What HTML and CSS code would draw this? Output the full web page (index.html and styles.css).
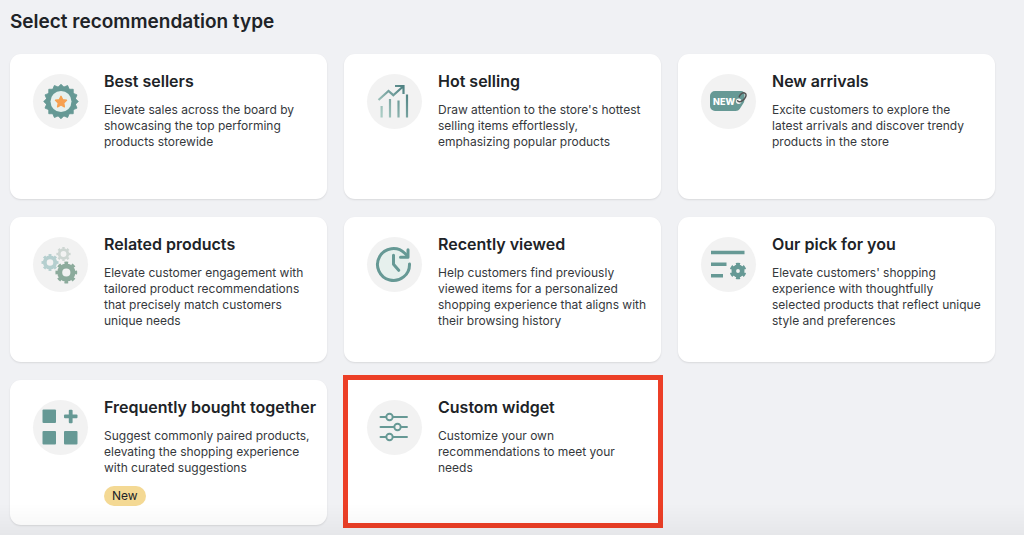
FILE: index.html
```html
<!DOCTYPE html>
<html lang="en">
<head>
<meta charset="utf-8">
<meta name="viewport" content="width=device-width, initial-scale=1">
<title>Select recommendation type</title>
<link rel="stylesheet" href="styles.css">
</head>
<body>
<main class="page">
  <h1 class="page-title">Select recommendation type</h1>
  <div class="card-grid">
    <button type="button" class="card">
      <svg class="card-icon" viewBox="0 0 55 55" aria-hidden="true">
        <g fill="#669995" stroke="#669995" stroke-width=".8" stroke-linejoin="round" transform="translate(28 27.5)">
          <path d="M0-17.300 17.300 0 0 17.300-17.300 0z"/>
          <path d="M0-17.300 17.300 0 0 17.300-17.300 0z" transform="rotate(22.5)"/>
          <path d="M0-17.300 17.300 0 0 17.300-17.300 0z" transform="rotate(45)"/>
          <path d="M0-17.300 17.300 0 0 17.300-17.300 0z" transform="rotate(67.5)"/>
        </g>
        <circle cx="28" cy="27.5" r="10.5" fill="#e6f0ed"/>
        <path d="M28 22.3l1.7 3.5 3.8.5-2.8 2.7.7 3.8-3.4-1.8-3.4 1.8.7-3.8-2.8-2.700 3.800-.5z" fill="#f6a04f" stroke="#f6a04f" stroke-width="1.4" stroke-linejoin="round"/>
      </svg>
      <span class="card-body">
        <span class="card-title">Best sellers</span>
        <span class="card-text">Elevate sales across the board by showcasing the top performing products storewide</span>
      </span>
    </button>
    <button type="button" class="card">
      <svg class="card-icon" viewBox="0 0 55 55" aria-hidden="true">
        <defs>
          <linearGradient id="growth" gradientUnits="userSpaceOnUse" x1="13" y1="38" x2="40" y2="18">
            <stop offset="0" stop-color="#a9cbc3"/><stop offset="1" stop-color="#4f8283"/>
          </linearGradient>
        </defs>
        <g fill="none" stroke="url(#growth)" stroke-width="2.2">
          <path d="M11.500 26 21.500 17l4.800 4.200L36 12.500M28 12h8.500v8"/>
          <path d="M14.600 32v11.500M23 25v18.500M31.500 26.500v17M40 20.500v23"/>
        </g>
      </svg>
      <span class="card-body">
        <span class="card-title">Hot selling</span>
        <span class="card-text">Draw attention to the store's hottest selling items effortlessly, emphasizing popular products</span>
      </span>
    </button>
    <button type="button" class="card">
      <svg class="card-icon" viewBox="0 0 55 55" aria-hidden="true">
        <path d="M14 17h26q3.500 0 3.500 3.500v5q0 2-1.300 4l-3.500 5.500q-1.300 2-4 2H14a5 5 0 0 1-5-5V22a5 5 0 0 1 5-5z" fill="#669995"/>
        <circle cx="37.700" cy="27.300" r="2.700" fill="#f2f2f2"/>
        <path d="M36.500 26.800c1.500 1.800 5 .5 7-2 2.200-2.700 2-5.500 0-5.900-2-.4-5 1.500-5.300 4" fill="none" stroke="#555" stroke-width="1.500" stroke-linecap="round"/>
        <text class="tag-label" x="12" y="31">NEW</text>
      </svg>
      <span class="card-body">
        <span class="card-title">New arrivals</span>
        <span class="card-text">Excite customers to explore the latest arrivals and discover trendy products in the store</span>
      </span>
    </button>
    <button type="button" class="card">
      <svg class="card-icon" viewBox="0 0 55 55" aria-hidden="true">
        <g fill="none" stroke="#b5cfcf" transform="translate(17 25.500)">
          <circle r="5.200" stroke-width="3.800"/>
          <circle r="7.400" stroke-width="2.200" pathLength="16" stroke-dasharray="1 1" stroke-dashoffset=".5"/>
        </g>
        <g fill="none" stroke="#cdd6d2" transform="translate(30.500 17)">
          <circle r="4.300" stroke-width="2.800"/>
          <circle r="6.100" stroke-width="2" pathLength="16" stroke-dasharray="1 1" stroke-dashoffset=".5"/>
        </g>
        <circle cx="33.300" cy="35.500" r="7" fill="#f2f2f2"/>
        <g fill="none" stroke="#8cab9c" transform="translate(33.300 35.500)">
          <circle r="6.600" stroke-width="5"/>
          <circle r="9.600" stroke-width="2.600" pathLength="16" stroke-dasharray="1 1" stroke-dashoffset=".5"/>
        </g>
      </svg>
      <span class="card-body">
        <span class="card-title">Related products</span>
        <span class="card-text">Elevate customer engagement with tailored product recommendations that precisely match customers unique needs</span>
      </span>
    </button>
    <button type="button" class="card">
      <svg class="card-icon" viewBox="0 0 55 55" aria-hidden="true">
        <circle cx="26.500" cy="27.500" r="16" fill="#e6f0ed"/>
        <g fill="none" stroke="#669995" stroke-width="3" stroke-linecap="round" stroke-linejoin="round">
          <path d="M42.500 27A16 16 0 1 1 37.800 16.200L40.500 19"/>
          <path d="M33.500 20.300h7.500v-7.500"/>
          <path d="M26.500 18.300v9l5.200 6"/>
        </g>
      </svg>
      <span class="card-body">
        <span class="card-title">Recently viewed</span>
        <span class="card-text">Help customers find previously viewed items for a personalized shopping experience that aligns with their browsing history</span>
      </span>
    </button>
    <button type="button" class="card">
      <svg class="card-icon" viewBox="0 0 55 55" aria-hidden="true">
        <path d="M10 15.500h33.500M10 27.200h15.500M10 38.800h12" stroke="#669995" stroke-width="3.400"/>
        <g fill="none" stroke="#669995" transform="translate(37 34)">
          <circle r="4.200" stroke-width="4.600"/>
          <circle r="6.800" stroke-width="3" pathLength="12" stroke-dasharray="1.100 .9" stroke-dashoffset=".55" transform="rotate(-90)"/>
        </g>
      </svg>
      <span class="card-body">
        <span class="card-title">Our pick for you</span>
        <span class="card-text">Elevate customers' shopping experience with thoughtfully selected products that reflect unique style and preferences</span>
      </span>
    </button>
    <button type="button" class="card">
      <svg class="card-icon" viewBox="0 0 55 55" aria-hidden="true">
        <g fill="#669995">
          <rect x="9.500" y="9.500" width="13.500" height="13.500" rx="1"/>
          <rect x="9.500" y="31" width="13.500" height="13.500" rx="1"/>
          <rect x="31" y="31" width="13.500" height="13.500" rx="1"/>
          <rect x="31" y="14.500" width="13.500" height="3.800" rx="1"/>
          <rect x="35.800" y="9.700" width="3.800" height="13.500" rx="1"/>
        </g>
      </svg>
      <span class="card-body">
        <span class="card-title">Frequently bought together</span>
        <span class="card-text">Suggest commonly paired products, elevating the shopping experience with curated suggestions</span>
        <span class="badge">New</span>
      </span>
    </button>
    <button type="button" class="card card-highlighted">
      <svg class="card-icon" viewBox="0 0 55 55" aria-hidden="true">
        <g fill="#f2f2f2" stroke="#669995" stroke-width="1.900" stroke-linecap="round">
          <path d="M13.500 17h26.500M13.500 27h26.500M13.500 37h26.500"/>
          <circle cx="22.500" cy="17" r="3.200"/>
          <circle cx="30.500" cy="27" r="3.200"/>
          <circle cx="22.500" cy="37" r="3.200"/>
        </g>
      </svg>
      <span class="card-body">
        <span class="card-title">Custom widget</span>
        <span class="card-text">Customize your own recommendations to meet your needs</span>
      </span>
    </button>
  </div>
</main>
</body>
</html>
```
FILE: styles.css
```css
* {
  box-sizing: border-box;
}

body {
  margin: 0;
  background: #f0f1f4;
  color: #202327;
  font-family: Inter, "Liberation Sans", sans-serif;
}

/* Soft shade along the bottom edge of the window */
body::after {
  content: "";
  position: fixed;
  inset: auto 0 0;
  height: 32px;
  background: linear-gradient(rgba(0, 0, 0, 0), rgba(0, 0, 0, 0.04));
  pointer-events: none;
}

.page {
  padding: 8px 29px 10px 10px;
}

.page-title {
  margin: 0 0 18px;
  font-size: 19px;
  font-weight: 600;
  line-height: 28px;
}

.card-grid {
  display: grid;
  grid-template-columns: repeat(3, minmax(0, 1fr));
  grid-auto-rows: minmax(145px, auto);
  gap: 18px 17px;
}

.card {
  position: relative;
  display: flex;
  align-items: flex-start;
  gap: 16px;
  padding: 16px 12px 16px 23px;
  border: 0;
  border-radius: 11px;
  background: #fff;
  box-shadow: 0 1px 2px rgba(0, 0, 0, 0.1);
  color: inherit;
  font: inherit;
  text-align: left;
  cursor: pointer;
}

.card-highlighted {
  border-radius: 4px;
}

/* Marker frame drawn over the card's edges */
.card-highlighted::after {
  content: "";
  position: absolute;
  inset: -5px -2px -3px -1px;
  border: 5px solid #ec3f27;
}

.card-icon {
  flex: none;
  width: 55px;
  height: 55px;
  margin-top: 4px;
  border-radius: 50%;
  background: #f2f2f2;
}

.tag-label {
  fill: #fff;
  font-size: 9px;
  font-weight: 800;
}

.card-body {
  display: flex;
  flex-direction: column;
  align-items: flex-start;
  min-width: 0;
}

.card-title {
  font-size: 16px;
  font-weight: 600;
  line-height: 22px;
  white-space: nowrap;
}

.card-text {
  margin-top: 10px;
  color: #35383c;
  font-size: 12px;
  line-height: 16px;
}

.badge {
  margin-top: 10px;
  padding: 0 8px;
  border-radius: 10px;
  background: #f4d994;
  font-size: 12px;
  line-height: 20px;
}
```
